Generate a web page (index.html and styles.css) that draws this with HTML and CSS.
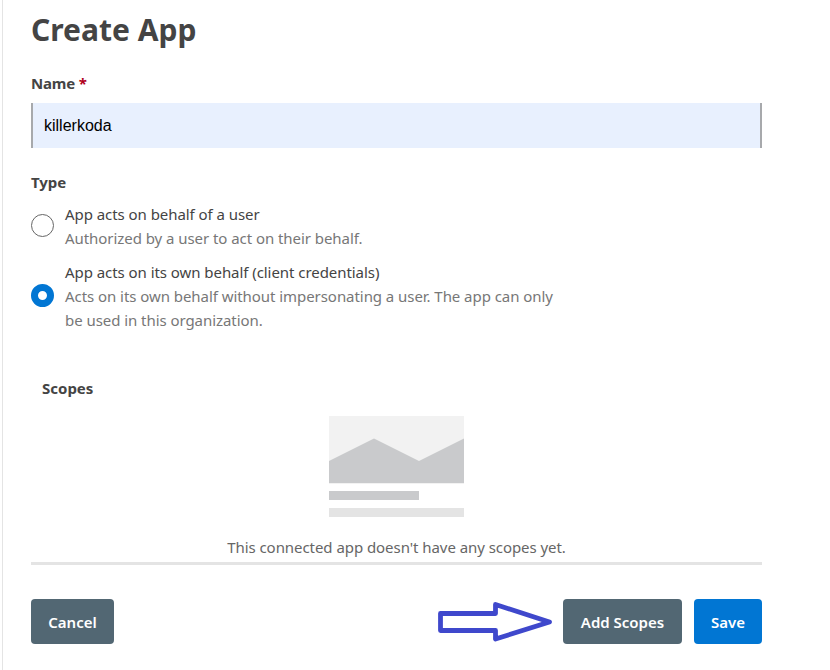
FILE: index.html
```html
<!DOCTYPE html>
<html lang="en">
<head>
<meta charset="utf-8">
<title>Create App</title>
<link rel="stylesheet" href="styles.css">
</head>
<body>
<main class="panel">
  <h1 class="title">Create App</h1>
  <form class="form">
    <label class="label name-label" for="name">Name <span class="required">*</span></label>
    <input class="field" id="name" type="text" value="killerkoda">
    <h2 class="label type-label">Type</h2>
    <div class="options">
      <label class="option">
        <input class="radio" type="radio" name="type">
        <span class="option-text">
          <span class="line">App acts on behalf of a user</span>
          <span class="line muted">Authorized by a user to act on their behalf.</span>
        </span>
      </label>
      <label class="option">
        <input class="radio" type="radio" name="type" checked>
        <span class="option-text">
          <span class="line">App acts on its own behalf (client credentials)</span>
          <span class="line muted">Acts on its own behalf without impersonating a user. The app can only</span>
          <span class="line muted">be used in this organization.</span>
        </span>
      </label>
    </div>
    <section class="scopes">
      <h2 class="label scopes-label">Scopes</h2>
      <svg class="placeholder" width="135" height="101" viewBox="0 0 135 101">
        <path fill="#f2f2f2" d="M0 0h135v67H0z"/>
        <path fill="#c9cacc" d="M0 45 45 22.5 90 45l45-22.5V67.3H0zM0 75h90v9H0z"/>
        <path fill="#e4e4e4" d="M0 92h135v9H0z"/>
      </svg>
      <p class="empty">This connected app doesn't have any scopes yet.</p>
    </section>
    <div class="actions">
      <button class="btn cancel" type="button">Cancel</button>
      <svg class="arrow" width="116" height="44" viewBox="0 0 116 44">
        <path d="M3.5 14.500h55V5.500l54 17.5L58.500 40V31.500H3.500z" fill="#fff" stroke="#3f48cc" stroke-width="4.800" stroke-linejoin="round"/>
      </svg>
      <button class="btn add" type="button">Add Scopes</button>
      <button class="btn save" type="button">Save</button>
    </div>
  </form>
</main>
</body>
</html>
```
FILE: styles.css
```css
* { box-sizing: border-box; }
body {
  margin: 0;
  background: #fff;
  color: #444;
  font: 15px/24px "Noto Sans", "Open Sans", sans-serif;
  letter-spacing: -0.055px;
}
.panel {
  width: 760px;
  height: 670px;
  margin-left: 2px;
  padding: 10px 0 0 28px;
  border-left: 1px solid #e4e4e4;
}
.title { margin: 0; height: 40px; font-size: 30px; line-height: 40px; font-weight: 700; letter-spacing: 0; }
.form { display: flex; flex-direction: column; }
.label { margin: 0; font-size: 15px; line-height: 24px; font-weight: 700; }
.name-label { margin: 21px 0 8px; letter-spacing: -0.2px; }
.required { color: #b00020; }
.field {
  width: 731px;
  height: 45px;
  padding: 0 11px;
  border: solid #a7a9ac;
  border-width: 0 2px;
  background: #e8f0fe;
  color: #000;
  font: 16px "Liberation Sans", sans-serif;
  outline: 0;
}
.type-label { margin-top: 22px; }
.options { display: flex; flex-direction: column; gap: 10px; margin-top: 8px; }
.option { display: flex; align-items: center; }
.radio {
  appearance: none;
  flex: none;
  width: 23px;
  height: 23px;
  margin: 0 11px 1px 0;
  border: 1px solid #666;
  border-radius: 50%;
  background: #fff;
}
.radio:checked { border: 7px solid #0176d3; }
.line { display: block; white-space: nowrap; }
.muted { color: #777; }
.scopes {
  display: flex;
  flex-direction: column;
  align-items: center;
  margin-top: 44px;
  border-bottom: 3px solid #e4e4e4;
}
.scopes-label { align-self: flex-start; margin-left: 11px; letter-spacing: 0; }
.placeholder { margin: 16px 0 18px; }
.empty { margin: 0 0 3px; color: #666; }
.actions { display: flex; margin-top: 34px; }
.btn {
  height: 45px;
  padding: 1px 0 0;
  border: 0;
  border-radius: 4px;
  background: #526773;
  color: #fff;
  font: 600 15px/44px "Noto Sans", "Open Sans", sans-serif;
}
.cancel { width: 83px; }
.arrow { margin: 0 10px 0 auto; }
.add { width: 119px; }
.save { width: 68px; margin-left: 12px; background: #0176d3; }
```
